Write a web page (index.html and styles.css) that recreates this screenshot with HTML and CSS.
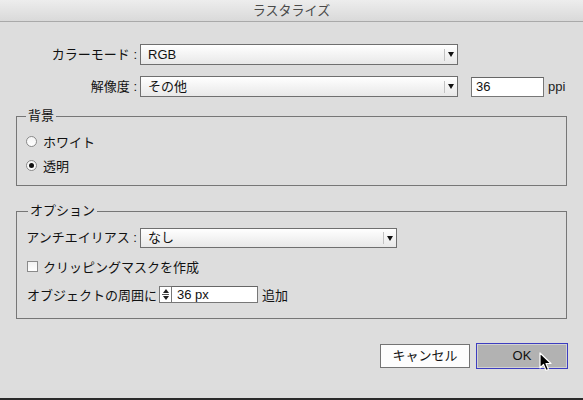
FILE: index.html
```html
<!DOCTYPE html>
<html lang="ja">
<head>
<meta charset="utf-8">
<title>ラスタライズ</title>
<link rel="stylesheet" href="styles.css">
</head>
<body>
<div class="window">
  <div class="titlebar">ラスタライズ</div>
  <div class="content">
    <div class="row">
      <span class="label">カラーモード :</span>
      <div class="select sel-wide"><span class="sel-text">RGB</span><span class="sel-btn"><span class="tri"></span></span></div>
    </div>
    <div class="row row-res">
      <span class="label">解像度 :</span>
      <div class="select sel-wide"><span class="sel-text">その他</span><span class="sel-btn"><span class="tri"></span></span></div>
      <div class="field res-field">36</div>
      <span class="unit">ppi</span>
    </div>
    <fieldset class="group group-bg">
      <legend>背景</legend>
      <div class="opt"><span class="radio"></span>ホワイト</div>
      <div class="opt"><span class="radio on"></span>透明</div>
    </fieldset>
    <fieldset class="group group-opt">
      <legend>オプション</legend>
      <div class="orow">
        <span class="label label-aa">アンチエイリアス :</span>
        <div class="select sel-aa"><span class="sel-text">なし</span><span class="sel-btn"><span class="tri"></span></span></div>
      </div>
      <div class="orow">
        <span class="check"></span>クリッピングマスクを作成
      </div>
      <div class="orow">
        <span class="olabel">オブジェクトの周囲に</span>
        <span class="stepper"><span class="up"></span><span class="mid"></span><span class="down"></span></span>
        <div class="field px-field">36 px</div>
        <span class="unit2">追加</span>
      </div>
    </fieldset>
  </div>
  <div class="buttons">
    <div class="btn btn-cancel">キャンセル</div>
    <div class="btn btn-ok">OK</div>
  </div>
  <div class="bottom-edge"></div>
  <svg class="cursor" width="13" height="20" viewBox="0 0 13 20">
    <path d="M1 1 L1 16 L4.5 12.5 L7 18.5 L9.5 17.5 L7 11.5 L12 11.5 Z" fill="#000" stroke="#fff" stroke-width="1.2" stroke-linejoin="round"/>
  </svg>
</div>
</body>
</html>
```
FILE: styles.css
```css
html, body {
  margin: 0;
  padding: 0;
  height: 400px;
  overflow: hidden;
}
body {
  background: #dddddd;
  font-family: "Liberation Sans", "Noto Sans CJK JP", sans-serif;
  font-size: 13px;
  color: #111;
}
.window {
  position: relative;
  height: 400px;
  display: flex;
  flex-direction: column;
}
.titlebar {
  height: 21px;
  line-height: 21px;
  text-align: center;
  color: #4a4a4a;
  background: linear-gradient(#ededed, #d9d9d9);
  border-bottom: 1px solid #a9a9a9;
  font-size: 13px;
}
.content {
  padding: 22px 16px 0;
}
.row {
  display: flex;
  align-items: center;
  height: 21px;
}
.row-res {
  margin-top: 11px;
}
.label {
  width: 121px;
  margin-right: 3px;
  text-align: right;
  line-height: 16px;
  white-space: nowrap;
}
.select {
  box-sizing: border-box;
  height: 21px;
  border: 1px solid #6f6f6f;
  background: linear-gradient(#ffffff, #e8e8e8);
  display: flex;
  align-items: center;
}
.sel-wide { width: 318px; }
.sel-text {
  flex: 1;
  padding-left: 7px;
  line-height: 16px;
}
.sel-btn {
  box-sizing: border-box;
  width: 13px;
  height: 12px;
  border-left: 1px solid #c2c2c2;
  display: flex;
  align-items: center;
  justify-content: center;
}
.tri {
  width: 0;
  height: 0;
  border-left: 3.5px solid transparent;
  border-right: 3.5px solid transparent;
  border-top: 5px solid #111;
}
.field {
  box-sizing: border-box;
  height: 20px;
  border: 1px solid #777;
  border-top-color: #666;
  background: #fff;
  padding-left: 4px;
  line-height: 18px;
}
.res-field {
  width: 73px;
  margin-left: 13px;
}
.unit {
  margin-left: 4px;
  color: #222;
}
.group {
  margin: 11px 0 0;
  border: 1px solid #767676;
  padding: 5px 10px 8px 9px;
  min-width: 0;
}
.group-opt {
  margin-top: 17px;
  padding-bottom: 10px;
}
legend {
  padding: 0 2px;
  margin-left: 0;
  height: 16px;
  line-height: 16px;
}
.group-opt legend { margin-left: 2px; }
.opt {
  display: flex;
  align-items: center;
  height: 24px;
}
.radio {
  box-sizing: border-box;
  width: 11px;
  height: 11px;
  border-radius: 50%;
  border: 1px solid #8a8a8a;
  background: linear-gradient(#f4f4f4, #ffffff);
  margin-right: 6px;
  display: flex;
  align-items: center;
  justify-content: center;
}
.radio.on::after {
  content: "";
  width: 5px;
  height: 5px;
  border-radius: 50%;
  background: #111;
}
.orow {
  display: flex;
  align-items: center;
  height: 28px;
}
.label-aa {
  width: 111px;
}
.sel-aa {
  width: 257px;
  height: 20px;
}
.check {
  box-sizing: border-box;
  width: 11px;
  height: 11px;
  border: 1px solid #8a8a8a;
  background: linear-gradient(#f2f2f2, #ffffff);
  margin: 0 5px 0 1px;
}
.olabel {
  margin-left: 1px;
  margin-right: 2px;
}
.stepper {
  box-sizing: border-box;
  width: 12px;
  height: 17px;
  border: 1px solid #777;
  border-right: none;
  background: #fff;
  display: flex;
  flex-direction: column;
  align-items: center;
  justify-content: center;
  gap: 1px;
}
.stepper .up {
  width: 0; height: 0;
  border-left: 3px solid transparent;
  border-right: 3px solid transparent;
  border-bottom: 4px solid #222;
}
.stepper .down {
  width: 0; height: 0;
  border-left: 3px solid transparent;
  border-right: 3px solid transparent;
  border-top: 4px solid #222;
}
.stepper .mid {
  width: 7px;
  height: 1px;
  background: #555;
}
.px-field {
  width: 87px;
  height: 17px;
  line-height: 15px;
  padding-left: 5px;
}
.unit2 {
  margin-left: 4px;
}
.buttons {
  display: flex;
  justify-content: flex-end;
  align-items: center;
  gap: 6px;
  padding: 24px 15px 0 0;
}
.btn {
  box-sizing: border-box;
  display: flex;
  align-items: center;
  justify-content: center;
  line-height: 16px;
}
.btn-cancel {
  width: 90px;
  height: 24px;
  background: #fdfdfd;
  border: 1px solid #747474;
}
.btn-ok {
  width: 92px;
  height: 26px;
  background: #b2b2b2;
  border: 1px solid #3d3dc0;
  box-shadow: inset 0 0 0 1px #d2d2d2;
}
.bottom-edge {
  margin-top: auto;
  height: 2px;
  background: #2a2a2a;
}
.cursor {
  position: absolute;
  left: 539px;
  top: 352px;
}
```
